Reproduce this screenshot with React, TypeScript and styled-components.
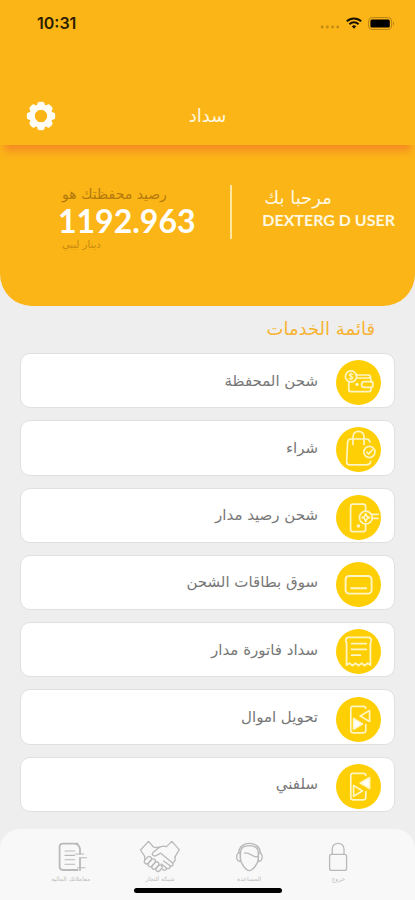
import React from "react";
import styled, { createGlobalStyle } from "styled-components";

const GlobalStyle = createGlobalStyle`
  * { box-sizing: border-box; }
  body { margin: 0; background: #eeeeee; }
  button { font: inherit; border: 0; padding: 0; background: none; color: inherit; cursor: pointer; }
`;

const Page = styled.div`
  min-height: 100vh;
  display: flex;
  flex-direction: column;
  background: #eeeeee;
  font-family: "DejaVu Sans", sans-serif;
`;

const Top = styled.header`
  position: relative;
  height: 145px;
  display: flex;
  flex-direction: column;
  justify-content: space-between;
  background: #fbb517;
  box-shadow: 0 10px 8px -4px #f58a24;
`;

const StatusBar = styled.div`
  display: flex;
  align-items: center;
  justify-content: space-between;
  padding: 13px 20px 0 37px;
`;

const Clock = styled.time`
  font: 600 16px/20px Inter, sans-serif;
  color: #2b1d00;
`;

const StatusIcons = styled.div`
  display: flex;
  align-items: center;
  gap: 6px;
`;

const TitleBar = styled.div`
  display: grid;
  grid-template-columns: 1fr auto 1fr;
  align-items: center;
  padding: 0 26px 13px;
`;

const Title = styled.h1`
  margin: 0;
  font-size: 18px;
  line-height: 24px;
  font-weight: 400;
  color: #fff8e0;
`;

const GearButton = styled.button`
  width: 30px;
  height: 32px;
  display: flex;
  align-items: center;
`;

const Hero = styled.section`
  height: 161px;
  display: flex;
  justify-content: space-between;
  padding: 40px 20px 0 58px;
  background: #fbb517;
  border-radius: 0 0 32px 32px;
`;

const Welcome = styled.div`
  display: flex;
  gap: 30px;
  color: #fff8e0;
`;

const Divider = styled.span`
  width: 2px;
  height: 54px;
  background: #ffe79d;
`;

const Greeting = styled.p`
  margin: 0;
  padding: 0 2px;
  font-size: 18px;
  line-height: 26px;
`;

const UserName = styled.p`
  margin: 0;
  font: 700 16px/18px Lato, sans-serif;
`;

const Balance = styled.div`
  display: flex;
  flex-direction: column;
  align-items: flex-start;
`;

const Caption = styled.span<{ $small?: boolean }>`
  padding-left: 4px;
  font-size: ${(p) => (p.$small ? 10 : 14)}px;
  line-height: ${(p) => (p.$small ? 12 : 18)}px;
  color: ${(p) => (p.$small ? "#c78910" : "#b57a0b")};
`;

const Amount = styled.strong`
  font: 700 32px/36px Lato, sans-serif;
  color: #ffffff;
`;

const Services = styled.main`
  flex: 1;
  display: flex;
  flex-direction: column;
  padding: 11px 20px 17px;
`;

const SectionTitle = styled.h2`
  margin: 0 0 12px;
  padding: 0 20px;
  font-size: 18px;
  line-height: 24px;
  font-weight: 400;
  color: #f6b334;
`;

const ServiceList = styled.ul`
  flex: 1;
  display: grid;
  grid-auto-rows: 1fr;
  gap: 12px;
  margin: 0;
  padding: 0;
  list-style: none;
`;

const ServiceButton = styled.button`
  width: 100%;
  height: 100%;
  min-height: 54px;
  display: flex;
  align-items: center;
  gap: 18px;
  padding: 4px 13px 0;
  background: #ffffff;
  border: 1px solid #e0e0e0;
  border-radius: 10px;
  font-size: 15px;
  color: #777777;
`;

const ServiceLabel = styled.span`
  padding-bottom: 4px;
  line-height: 24px;
`;

const Disc = styled.span`
  flex: none;
  display: grid;
  width: 45px;
  height: 45px;
  border-radius: 50%;
  background: #ffcf05;
`;

const BottomNav = styled.nav`
  display: flex;
  flex-direction: column;
  align-items: center;
  gap: 5px;
  height: 71px;
  padding-top: 11px;
  background: #f8f8f8;
  border-radius: 20px 20px 0 0;
`;

const Tabs = styled.div`
  width: 100%;
  display: grid;
  grid-template-columns: repeat(4, 1fr);
  padding: 0 32px 0 26px;
`;

const Tab = styled.button`
  display: flex;
  flex-direction: column;
  align-items: center;
  gap: 1px;
  font-size: 6px;
  line-height: 8px;
  color: #bdbdbd;
`;

const HomeIndicator = styled.span`
  width: 148px;
  height: 5px;
  border-radius: 3px;
  background: #000000;
`;

const Gear = () => (
  <svg width="30" height="30" viewBox="0 0 30 30" aria-hidden="true">
    <g fill="#fffdf5">
      {[0, 45, 90, 135, 180, 225, 270, 315].map((a) => (
        <rect key={a} x="11.3" y="0.8" width="7.4" height="8" rx="2.6" transform={`rotate(${a} 15 15)`} />
      ))}
    </g>
    <circle cx="15" cy="15" r="9" fill="none" stroke="#fffdf5" strokeWidth="5.4" />
  </svg>
);

const Signal = () => (
  <svg width="20" height="14" viewBox="0 0 20 14" aria-hidden="true" fill="#c18a18">
    <circle cx="2.2" cy="11" r="1.4" />
    <circle cx="7.4" cy="11" r="1.4" />
    <circle cx="12.6" cy="11" r="1.4" />
    <circle cx="17.8" cy="11" r="1.4" />
  </svg>
);

const Wifi = () => (
  <svg width="16" height="12" viewBox="0 0 16 12" aria-hidden="true" fill="none" stroke="#1a1200" strokeWidth="2">
    <path d="M.8 4.3a10.4 10.4 0 0 1 14.4 0" />
    <path d="M3.4 7.2a6.6 6.6 0 0 1 9.2 0" />
    <path d="M5.8 9.2a3.2 3.2 0 0 1 4.4 0L8 11.7z" fill="#1a1200" stroke="none" />
  </svg>
);

const Battery = () => (
  <svg width="27" height="13" viewBox="0 0 27 13" aria-hidden="true">
    <rect x=".6" y=".6" width="23" height="11.8" rx="3.4" fill="none" stroke="#b98413" />
    <rect x="2.4" y="2.4" width="19.4" height="8.2" rx="1.6" fill="#000" />
    <path d="M25 4.4c1.4.4 1.4 3.8 0 4.2z" fill="#b98413" />
  </svg>
);

const Glyph = ({ children }: { children: React.ReactNode }) => (
  <svg
    width="45"
    height="45"
    viewBox="0 0 45 45"
    aria-hidden="true"
    fill="none"
    stroke="#fff5c4"
    strokeWidth="1.7"
    strokeLinecap="round"
    strokeLinejoin="round"
  >
    {children}
  </svg>
);

const WalletGlyph = () => (
  <Glyph>
    <circle cx="15" cy="16.5" r="5.6" />
    <path d="M17 14.4c-1.2-1.1-3.8-.8-3.8.7 0 1.6 3.7.9 3.7 2.6 0 1.5-2.7 1.8-3.9.6M15 13v7" strokeWidth="1.2" />
    <path d="M20 15h12c1.800 0 2.500.8 2.500 2.400M20.600 18H33c1.200 0 2 .7 2 2v1.600M12.800 22v7.600c0 1.300.8 2 2 2H33c1.200 0 2-.7 2-2v-2.200" />
    <path d="M28.400 21.600h7.200c1.200 0 1.200.6 1.200 1.400v3c0 .8-.3 1.400-1.200 1.400h-7.200c-3.800 0-3.800-5.800 0-5.800z" />
    <circle cx="21" cy="24.4" r=".8" fill="#fff5c4" />
  </Glyph>
);

const BagGlyph = () => (
  <Glyph>
    <path d="M34 15.2c-.4-2.2-1.4-3.2-3.4-3.2H15c-2.2 0-3.2 1-3.4 3.2l-1 19.600c0 2 1 3 2.800 3H30c2.700 0 4.400-.9 4.600-3.400" />
    <path d="M17 17.4V10c0-7.6 11-7.6 11 0v7.4" />
    <circle cx="33.4" cy="25" r="5.6" />
    <path d="m30.8 25.2 1.8 1.8 3.6-4" />
  </Glyph>
);

const TopUpGlyph = () => (
  <Glyph>
    <path d="M29.6 16v-4.5c0-1.6-.8-2.4-2.4-2.4H17c-1.6 0-2.4.8-2.4 2.4v22.8c0 1.6.8 2.4 2.4 2.4h10.2c1.6 0 2.4-.8 2.4-2.4v-5" />
    <circle cx="29.8" cy="22.6" r="6.4" />
    <path d="m29.8 18.8 1.2 2.6 2.6 1.2-2.6 1.2-1.2 2.6-1.2-2.6-2.6-1.2 2.6-1.2zM36 19.4h6.2M36.6 23.4H42" />
    <circle cx="22.4" cy="31" r=".9" fill="#fff5c4" />
  </Glyph>
);

const CardGlyph = () => (
  <Glyph>
    <rect x="9.6" y="14" width="26" height="17.6" rx="3.4" strokeWidth="1.9" />
    <path d="M15.2 26.2h15" strokeWidth="1.9" />
  </Glyph>
);

const BillGlyph = () => (
  <Glyph>
    <path
      d="M9.8 11.6c0-2 1-3.2 3-3.2h19.4c2 0 3 1.2 3 3.2 0 1.2-.8 1.6-.8 3V36l-2.700-1.800-3 2.400-3-2.400-3.200 2.400-3-2.400-3 2.400-3-2.400L10.600 36V14.600c0-1.400-.8-1.800-.8-3z"
      strokeWidth="1.8"
    />
    <path d="M15.600 14.600h14.600M15.600 20.400h14.600M15.600 26.200h8.800" strokeWidth="1.8" />
  </Glyph>
);

const TransferGlyph = ({ filled }: { filled: "lower" | "upper" }) => (
  <Glyph>
    <path d="M29.600 11.200c0-1.200-.7-1.800-2-1.800h-10.600c-1.500 0-2.200.7-2.200 2.200v22c0 1.500.7 2.200 2.200 2.200h10.600c1.500 0 2.200-.7 2.200-2.200v-6" />
    <path d="M33.600 13.600v10.800L24.200 19z" fill={filled === "upper" ? "#ffffff" : "none"} />
    <path d="M17.600 21.400v10.800L26.400 27z" fill={filled === "lower" ? "#ffffff" : "none"} />
  </Glyph>
);

const NavGlyph = ({ children }: { children: React.ReactNode }) => (
  <svg
    width="42"
    height="34"
    viewBox="0 0 42 34"
    aria-hidden="true"
    fill="none"
    stroke="#b9b9b9"
    strokeWidth="1.3"
    strokeLinecap="round"
    strokeLinejoin="round"
  >
    {children}
  </svg>
);

const LockGlyph = () => (
  <NavGlyph>
    <rect x="12.6" y="14.4" width="17" height="16" rx="2" />
    <path d="M15.2 14.4V9c0-7.600 11.800-7.600 11.800 0v5.400" />
  </NavGlyph>
);

const SupportGlyph = () => (
  <NavGlyph>
    <path d="M12.4 13.6C12.4 7.5 16 5.600 21.400 5.600s9 2 9 8v5c0 5-6 12-9 12s-9-7-9-12z" />
    <path d="M10.6 12.6c1-12.400 20.800-12.400 21.800 0M16.400 13c3-1 5 .4 8 2.600 2 1.400 4 1.400 5.800.8" />
    <path d="M12.4 12.6c-5 0-5 9 0 9zM30.400 12.600c5 0 5 9 0 9z" />
  </NavGlyph>
);

const HandshakeGlyph = () => (
  <NavGlyph>
    <path d="M14.5 7 9.5 1.4 1.5 10l4.2 6.400M27.500 6.600l5.200-5.200 7.600 8.200-4.200 7M14.500 7c2.200.7 4.200.6 6.200 0" />
    <path d="M27.500 6.600c-3.400-1-6-.4-8 1.400l-5.800 4.800c-1.400 1.800.8 4 3.400 2.800l4.600-2.400L33 22.400c2.400 2.200.4 4.600-2.200 3.200" />
    <path d="m24.600 21 6.200 4.600c1.400 2-.8 3.800-3 2.600L22.400 24M27.800 28.200c-.4 2-2.200 2.400-4 1.400M36.100 16.600v4l-2.200 2.600M5.700 16.400v3" />
    <rect x="6.8" y="16" width="4.4" height="8.4" rx="2.2" transform="rotate(42 9 20)" />
    <rect x="10.4" y="18.4" width="4.400" height="8.800" rx="2.200" transform="rotate(42 12.600 23)" />
    <rect x="14.2" y="21.400" width="4.400" height="8.400" rx="2.200" transform="rotate(42 16.400 25.600)" />
    <rect x="18" y="24.600" width="4.200" height="7.200" rx="2.100" transform="rotate(42 20 28.200)" />
  </NavGlyph>
);

const StatementGlyph = () => (
  <NavGlyph>
    <path d="M27.6 3.6H13c-2 0-3.400 1.400-3.400 3.400v19.600c0 2 1.400 3.400 3.400 3.400h14.600M24.600 3.600c3.400.4 4.600 1.600 5.400 5.200v5M30 18v12" strokeWidth="1.8" />
    <path d="M15 11h9.600M15 15.400h9.600M15 19.800h9.600M15 24.200h9.600M25.600 14h8M31 17.800h5.600M27.600 27.800H35" strokeWidth="1.1" />
  </NavGlyph>
);

const services = [
  { label: "شحن المحفظة", icon: <WalletGlyph /> },
  { label: "شراء", icon: <BagGlyph /> },
  { label: "شحن رصيد مدار", icon: <TopUpGlyph /> },
  { label: "سوق بطاقات الشحن", icon: <CardGlyph /> },
  { label: "سداد فاتورة مدار", icon: <BillGlyph /> },
  { label: "تحويل اموال", icon: <TransferGlyph filled="lower" /> },
  { label: "سلفني", icon: <TransferGlyph filled="upper" /> },
];

const tabs = [
  { label: "خروج", icon: <LockGlyph /> },
  { label: "المساعدة", icon: <SupportGlyph /> },
  { label: "شبكة التجار", icon: <HandshakeGlyph /> },
  { label: "معاملاتك المالية", icon: <StatementGlyph /> },
];

export default function App() {
  return (
    <Page dir="rtl" lang="ar">
      <GlobalStyle />
      <Top>
        <StatusBar dir="ltr">
          <Clock>10:31</Clock>
          <StatusIcons>
            <Signal />
            <Wifi />
            <Battery />
          </StatusIcons>
        </StatusBar>
        <TitleBar dir="ltr">
          <GearButton type="button" aria-label="الإعدادات">
            <Gear />
          </GearButton>
          <Title>سداد</Title>
        </TitleBar>
      </Top>
      <Hero dir="ltr">
        <Balance>
          <Caption dir="rtl">رصيد محفظتك هو</Caption>
          <Amount>1192.963</Amount>
          <Caption $small dir="rtl">دينار ليبي</Caption>
        </Balance>
        <Welcome>
          <Divider />
          <div>
            <Greeting>مرحبا بك</Greeting>
            <UserName>DEXTERG D USER</UserName>
          </div>
        </Welcome>
      </Hero>
      <Services>
        <SectionTitle>قائمة الخدمات</SectionTitle>
        <ServiceList>
          {services.map((s) => (
            <li key={s.label}>
              <ServiceButton type="button">
                <Disc>{s.icon}</Disc>
                <ServiceLabel>{s.label}</ServiceLabel>
              </ServiceButton>
            </li>
          ))}
        </ServiceList>
      </Services>
      <BottomNav>
        <Tabs>
          {tabs.map((t) => (
            <Tab key={t.label} type="button">
              {t.icon}
              <span>{t.label}</span>
            </Tab>
          ))}
        </Tabs>
        <HomeIndicator />
      </BottomNav>
    </Page>
  );
}
